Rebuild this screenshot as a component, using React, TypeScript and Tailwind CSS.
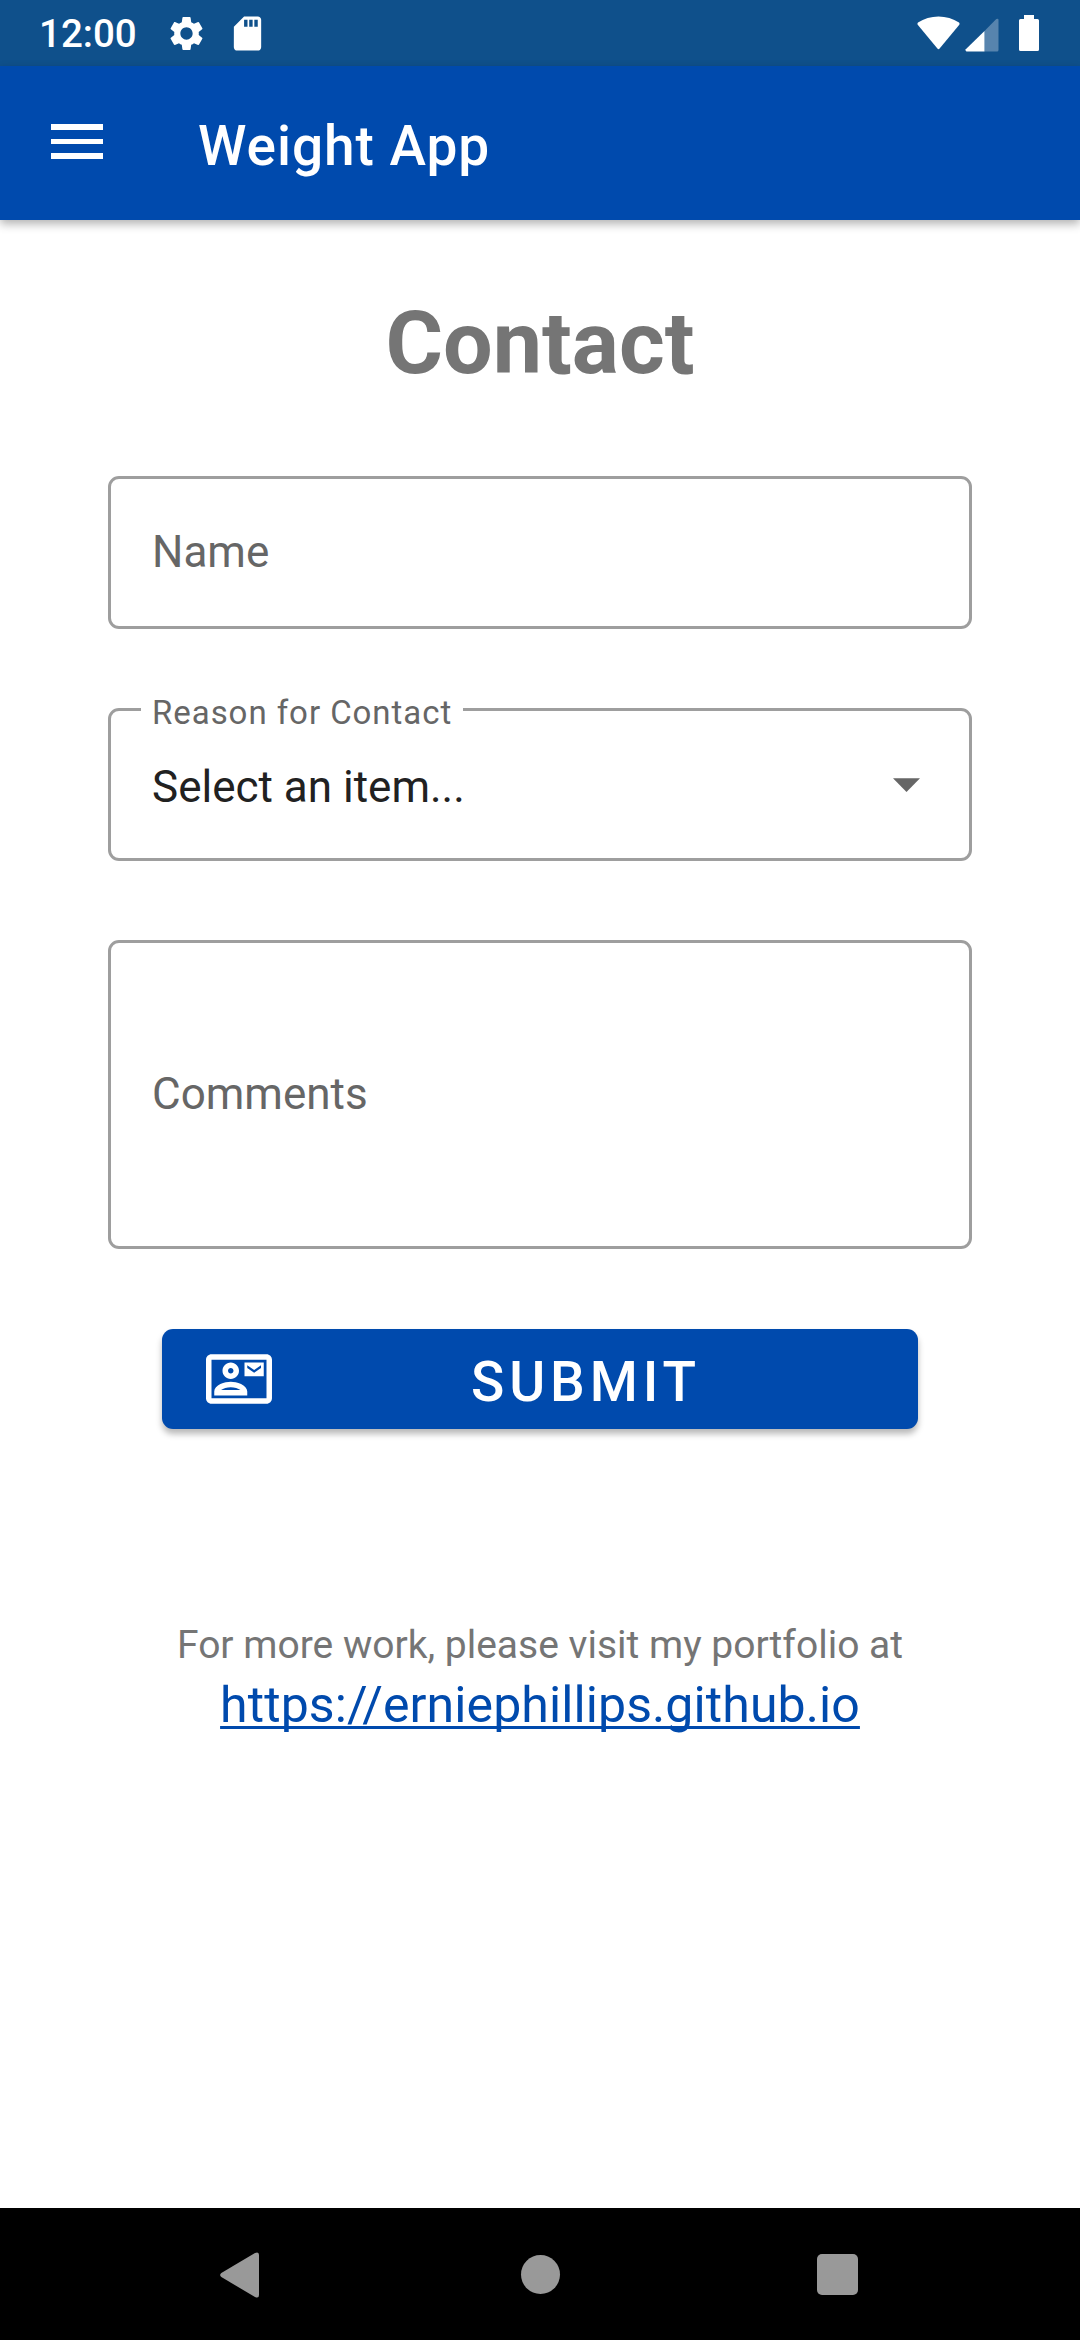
import { MdSettings, MdSdCard, MdOutlineContactMail } from "react-icons/md";

function StatusBar() {
  return (
    <header className="flex h-[66px] items-center bg-[#0f508b] pl-[39px] pr-[41px] text-white">
      <span className="mt-[3px] w-[127px] text-[38.5px] font-medium leading-none">12:00</span>
      <MdSettings className="size-[41px]" />
      <MdSdCard className="ml-5 size-[41px]" />
      <div className="ml-auto flex items-center">
        <svg className="h-[34px] w-[43px]" viewBox="0 0 43 34" fill="currentColor">
          <path d="M1 6.5C7 2.5 14 .5 21.500 .5S36 2.500 42 6.500Q43 7.500 42.300 8.700L22.600 32.600Q21.500 33.700 20.400 32.600L.7 8.700Q0 7.500 1 6.500Z" />
        </svg>
        <svg className="ml-[5px] mt-[3px] h-[34px] w-[34px]" viewBox="0 0 34 34" fill="currentColor">
          <path d="M19.500 13L31.300 1Q33.500 0 33.500 2V32Q33.500 33.500 32 33.500H19.500Z" opacity=".3" />
          <path d="M19.500 13V33.500H1.500Q0 33 .8 31.300Z" />
        </svg>
        <svg className="ml-5 h-[36px] w-[20px]" viewBox="0 0 20 36" fill="currentColor">
          <path d="M5 0H15V4H18.500Q20 4 20 5.500V34.500Q20 36 18.500 36H1.500Q0 36 0 34.500V5.500Q0 4 1.500 4H5Z" />
        </svg>
      </div>
    </header>
  );
}

function AppBar() {
  return (
    <div className="relative flex h-[154px] items-center bg-[#004aad] pl-[51px] text-white shadow-[0_4px_9px_rgba(0,0,0,0.3)]">
      <button className="flex w-[52px] flex-col gap-[9px] pb-[3px]" aria-label="Open menu">
        <span className="h-[5.5px] w-full bg-white" />
        <span className="h-[5.5px] w-full bg-white" />
        <span className="h-[5.5px] w-full bg-white" />
      </button>
      <h1 className="ml-[95px] mt-1.5 text-[55px] font-medium leading-none tracking-[0.95px]">Weight App</h1>
    </div>
  );
}

const box = "w-full rounded-[11px] border-[3px] border-[#9e9e9e]";

function ContactForm() {
  return (
    <form className="flex flex-col px-[108px]">
      <div className={`${box} flex h-[153px] items-center pb-px pl-[41px] text-[44px] text-[#666]`}>
        <label>Name</label>
      </div>
      <div className={`${box} relative mt-[79px] flex h-[153px] items-center justify-between pl-[41px] pr-[49px]`}>
        <label className="absolute -top-[14px] left-[30px] w-[322px] bg-white pl-[11px] text-[33px] leading-[32px] tracking-[0.95px] text-[#666]">
          Reason for Contact
        </label>
        <span className="mt-1 text-[44px] text-[#212121]">Select an item...</span>
        <svg className="h-[14px] w-[27px]" viewBox="0 0 27 14" fill="#666">
          <path d="M0 .3H27L13.500 14Z" />
        </svg>
      </div>
      <div className={`${box} mt-[79px] flex h-[309px] items-center pb-px pl-[41px] text-[44px] text-[#666]`}>
        <label>Comments</label>
      </div>
      <button
        type="button"
        className="mx-[54px] mt-20 flex h-[100px] items-center rounded-[11px] bg-[#004aad] pl-[44px] text-white shadow-[0_5px_6px_rgba(0,0,0,0.28)]"
      >
        <MdOutlineContactMail className="size-[66px]" />
        <span className="mr-[44px] mt-1.5 flex-1 pl-[199px] text-left text-[55px] font-medium leading-none tracking-[4.9px]">
          SUBMIT
        </span>
      </button>
    </form>
  );
}

function NavigationBar() {
  return (
    <nav className="flex h-[132px] items-center bg-black pl-[220px] text-[#999]">
      <svg className="mt-[1px] h-[46px] w-[39px]" viewBox="0 0 39 46" fill="currentColor">
        <path d="M1.300 21L35 1Q39-.8 39 3V43Q39 46.800 35 45L1.300 25Q-1 23 1.300 21Z" />
      </svg>
      <span className="ml-[262px] mt-[1px] size-[39px] rounded-full bg-[#999]" />
      <span className="ml-[257px] mt-[1px] size-[41px] rounded-[5px] bg-[#999]" />
    </nav>
  );
}

export default function App() {
  return (
    <div className="flex h-[2340px] w-[1080px] flex-col overflow-hidden bg-white font-['Roboto',sans-serif]">
      <StatusBar />
      <AppBar />
      <main className="flex flex-1 flex-col">
        <h2 className="mb-[83px] mt-[73px] text-center text-[88px] font-bold leading-[100px] text-[#757575]">Contact</h2>
        <ContactForm />
        <footer className="mt-[190px] flex flex-col items-center">
          <p className="text-[39px] leading-[52px] text-[#757575]">For more work, please visit my portfolio at</p>
          <a
            href="#portfolio"
            className="mt-1 text-[50px] leading-[60px] tracking-[0.1px] text-[#004aad] underline decoration-[2.500px] underline-offset-[4px] [text-decoration-skip-ink:none]"
          >
            https://erniephillips.github.io
          </a>
        </footer>
      </main>
      <NavigationBar />
    </div>
  );
}
